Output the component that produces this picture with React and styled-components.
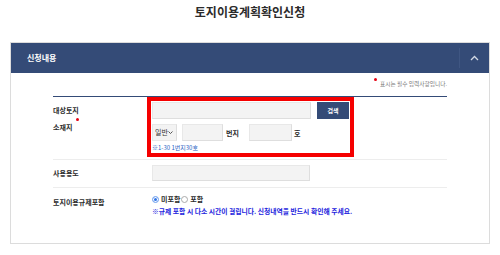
import React from "react"
import styled, { createGlobalStyle } from "styled-components"

const GlobalStyle = createGlobalStyle`
  body {
    margin: 0;
    background: #fff;
    color: #333;
    font-family: "Noto Sans CJK KR", "Noto Sans", sans-serif;
  }
  * {
    box-sizing: border-box;
  }
`

export default function App() {
  return (
    <>
      <GlobalStyle />
      <Title>토지이용계획확인신청</Title>
      <Panel>
        <PanelHeader>
          <PanelTitle>신청내용</PanelTitle>
          <Toggle type="button" aria-label="접기">
            <svg width="9" height="6" viewBox="0 0 9 6">
              <polyline
                points="1,5 4.5,1.5 8,5"
                fill="none"
                stroke="#d3d9e4"
                strokeWidth="1.3"
              />
            </svg>
          </Toggle>
        </PanelHeader>
        <PanelBody>
          <Notice>
            <Dot />
            표시는 필수 입력사항입니다.
          </Notice>
          <Table>
            <Row>
              <Label $top={5} $lh={17}>
                대상토지
                <br />
                소재지
                <RequiredDot />
              </Label>
              <Field $pad="4px 0 6px">
                <Highlight>
                  <Line>
                    <TextInput $w={159} />
                    <SearchButton type="button">검색</SearchButton>
                  </Line>
                  <Line $mt={5}>
                    <SelectWrap>
                      <Select defaultValue="일반">
                        <option>일반</option>
                        <option>산</option>
                      </Select>
                      <SelectArrow width="5" height="3" viewBox="0 0 5 3">
                        <polyline
                          points="0.5,0.5 2.5,2.5 4.5,0.5"
                          fill="none"
                          stroke="#444"
                          strokeWidth="0.9"
                        />
                      </SelectArrow>
                    </SelectWrap>
                    <TextInput $w={41} $ml={5} />
                    <Unit $ml={3}>번지</Unit>
                    <TextInput $w={43} $ml={10} />
                    <Unit $ml={2}>호</Unit>
                  </Line>
                  <Hint>※1-30 1번지30호</Hint>
                </Highlight>
              </Field>
            </Row>
            <Row>
              <Label $top={5} $lh={16}>
                사용용도
              </Label>
              <Field $pad="5px 0 6px 1px">
                <TextInput $w={158} $h={16} />
              </Field>
            </Row>
            <Row $last>
              <Label $top={8} $lh={12}>
                토지이용규제포함
              </Label>
              <Field $pad="5px 0 0 1px">
                <RadioLine>
                  <RadioItem>
                    <Radio $checked />
                    미포함
                  </RadioItem>
                  <RadioItem>
                    <Radio />
                    포함
                  </RadioItem>
                </RadioLine>
                <Warning>
                  ※규제 포함 시 다소 시간이 걸립니다. 신청내역을 반드시 확인해
                  주세요.
                </Warning>
              </Field>
            </Row>
          </Table>
        </PanelBody>
      </Panel>
    </>
  )
}

const Title = styled.h1`
  margin: 0 0 22px;
  padding-top: 4px;
  text-align: center;
  font-size: 12px;
  line-height: 16px;
  font-weight: 700;
  color: #2b2b2b;
`

const Panel = styled.section`
  margin: 0 10px;
  border: 1px solid #dcdcdc;
  background: #fff;
`

const PanelHeader = styled.div`
  display: flex;
  align-items: stretch;
  height: 30px;
  background: #344b77;
`

const PanelTitle = styled.h2`
  flex: 1;
  margin: 0;
  padding-left: 16px;
  font-size: 8px;
  line-height: 30px;
  font-weight: 700;
  color: #fff;
`

const Toggle = styled.button`
  display: flex;
  align-items: center;
  justify-content: center;
  width: 30px;
  margin: 5px 0;
  padding: 0;
  border: none;
  border-left: 1px solid #3f5682;
  background: transparent;
  cursor: pointer;
`

const PanelBody = styled.div`
  padding: 0 42px 25px 42px;
`

const Notice = styled.p`
  position: relative;
  margin: 0 0 7px;
  padding-top: 5px;
  text-align: right;
  font-size: 5.7px;
  line-height: 10px;
  color: #777;
`

const Dot = styled.span`
  display: inline-block;
  width: 3px;
  height: 3px;
  margin-right: 3px;
  border-radius: 50%;
  background: #e60012;
  vertical-align: 5px;
`

const Table = styled.div`
  border-top: 1px solid #344b77;
`

const Row = styled.div`
  display: grid;
  grid-template-columns: 98px 1fr;
  border-bottom: ${p => (p.$last ? "none" : "1px solid #ededed")};
`

const Label = styled.div`
  position: relative;
  padding-top: ${p => p.$top}px;
  font-size: 7px;
  line-height: ${p => p.$lh}px;
  font-weight: 700;
  color: #2b2b2b;
`

const RequiredDot = styled.span`
  position: absolute;
  left: 23px;
  top: 21px;
  width: 3px;
  height: 3px;
  border-radius: 50%;
  background: #e60012;
`

const Field = styled.div`
  display: flex;
  flex-direction: column;
  align-items: flex-start;
  padding: ${p => p.$pad};
`

const Highlight = styled.div`
  display: flex;
  flex-direction: column;
  padding: 1px;
  outline: 4px solid #f50000;
`

const Line = styled.div`
  display: flex;
  align-items: center;
  height: 17px;
  margin-top: ${p => p.$mt || 0}px;
`

const TextInput = styled.input`
  display: block;
  width: ${p => p.$w}px;
  height: ${p => p.$h || 17}px;
  margin: 0 0 0 ${p => p.$ml || 0}px;
  padding: 0 3px;
  border: 1px solid #e8e8e8;
  border-right-color: #dedede;
  border-bottom-color: #dedede;
  background: #f3f3f3;
  font-size: 7px;
  outline: none;
`

const SearchButton = styled.button`
  display: block;
  width: 32px;
  height: 17px;
  margin: 0 0 0 6px;
  padding: 0;
  border: none;
  background: #344b77;
  color: #fff;
  font-family: inherit;
  font-size: 6px;
  font-weight: 700;
  cursor: pointer;
`

const SelectWrap = styled.div`
  position: relative;
  width: 25px;
  height: 17px;
`

const Select = styled.select`
  appearance: none;
  display: block;
  width: 25px;
  height: 17px;
  margin: 0;
  padding: 0 0 0 2px;
  border: 1px solid #e8e8e8;
  border-right-color: #dedede;
  border-radius: 0;
  background: #f3f3f3;
  color: #333;
  font-family: inherit;
  font-size: 7px;
  line-height: 15px;
  outline: none;
`

const SelectArrow = styled.svg`
  position: absolute;
  right: 4px;
  top: 7px;
  pointer-events: none;
`

const Unit = styled.span`
  margin-left: ${p => p.$ml}px;
  font-size: 7px;
  font-weight: 700;
  color: #2b2b2b;
`

const Hint = styled.div`
  margin-top: 3px;
  font-size: 6px;
  line-height: 8px;
  color: #2a63c4;
`

const RadioLine = styled.div`
  display: flex;
  align-items: center;
  height: 12px;
`

const RadioItem = styled.label`
  display: flex;
  align-items: center;
  margin-right: 1px;
  font-size: 7px;
  font-weight: 700;
  color: #2b2b2b;
`

const Radio = styled.span`
  display: inline-block;
  width: 7px;
  height: 7px;
  margin-right: 2px;
  border-radius: 50%;
  border: 1px solid ${p => (p.$checked ? "#8db4f2" : "#aaa")};
  background: ${p => (p.$checked ? "#2f74e6" : "#fff")};
  box-shadow: ${p => (p.$checked ? "inset 0 0 0 1px #fff" : "none")};
`

const Warning = styled.p`
  margin: 0;
  font-size: 6.8px;
  line-height: 13px;
  font-weight: 700;
  color: #2323dd;
`
